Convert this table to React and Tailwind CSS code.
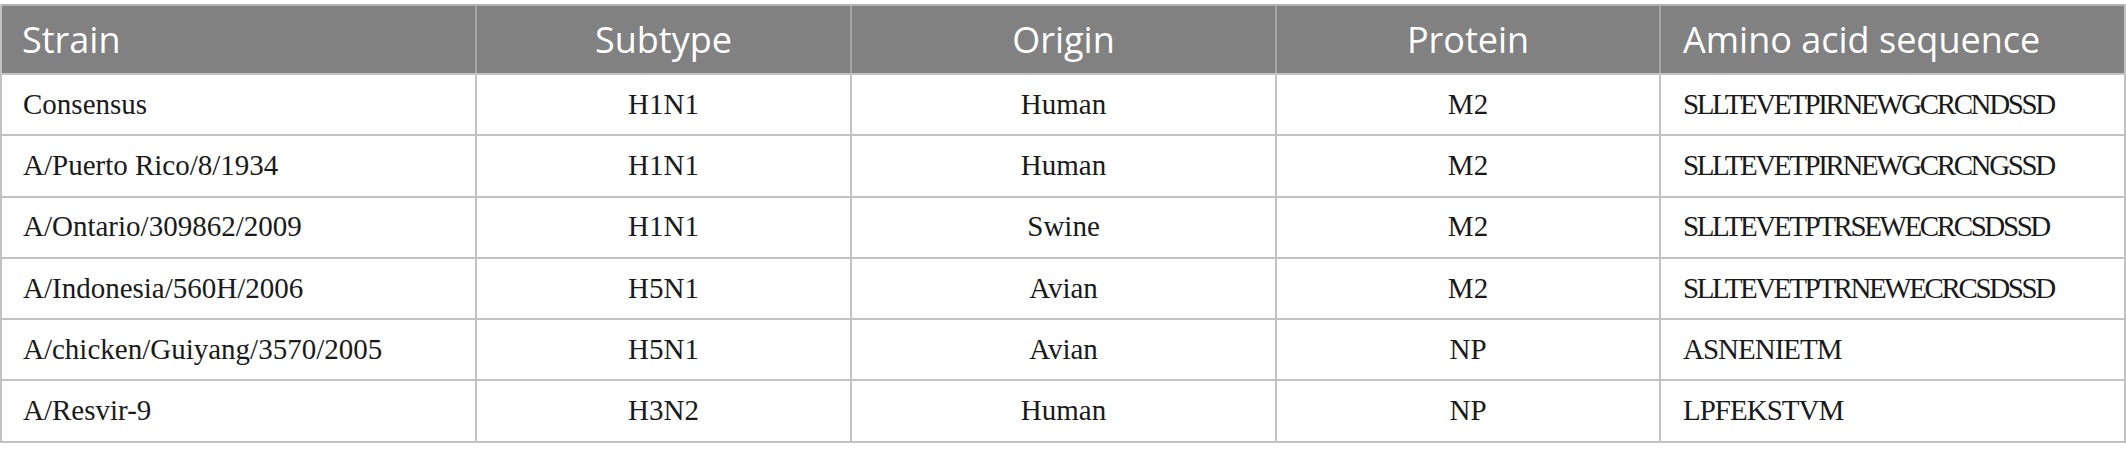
const columns = [
  { label: 'Strain', head: 'text-left pl-[20px]', body: 'text-left pl-[21px]' },
  { label: 'Subtype', head: 'text-center', body: 'text-center' },
  { label: 'Origin', head: 'text-center', body: 'text-center' },
  { label: 'Protein', head: 'text-center', body: 'text-center' },
  { label: 'Amino acid sequence', head: 'text-left pl-[22px]', body: 'text-left pl-[22px]' },
]

const rows = [
  ['Consensus', 'H1N1', 'Human', 'M2', 'SLLTEVETPIRNEWGCRCNDSSD'],
  ['A/Puerto Rico/8/1934', 'H1N1', 'Human', 'M2', 'SLLTEVETPIRNEWGCRCNGSSD'],
  ['A/Ontario/309862/2009', 'H1N1', 'Swine', 'M2', 'SLLTEVETPTRSEWECRCSDSSD'],
  ['A/Indonesia/560H/2006', 'H5N1', 'Avian', 'M2', 'SLLTEVETPTRNEWECRCSDSSD'],
  ['A/chicken/Guiyang/3570/2005', 'H5N1', 'Avian', 'NP', 'ASNENIETM'],
  ['A/Resvir-9', 'H3N2', 'Human', 'NP', 'LPFEKSTVM'],
]

const grid = 'grid grid-cols-[475px_375px_425px_384px_1fr]'

export default function App() {
  return (
    <div className="w-[2126px] h-[460px] bg-white pt-[4px]">
      <div className="border-2 border-t-0 border-[#c2c2c2]">
        {/* header */}
        <div className={`${grid} h-[69px] bg-[#808180] border-t-2 border-[#b2b2b2] text-white font-['Open_Sans',sans-serif] text-[36px]`}>
          {columns.map((c, i) => (
            <div
              key={c.label}
              className={`flex items-center ${i < 4 ? 'border-r-2 border-[#a6a6a6]' : ''} ${c.head} ${c.head.includes('center') ? 'justify-center' : ''}`}
            >
              {c.label}
            </div>
          ))}
        </div>

        {rows.map((r, ri) => (
          <div
            key={ri}
            className={`${grid} h-[61.3px] border-t-2 border-[#c2c2c2] font-['Liberation_Serif',serif] text-[29px] text-[#1a1a1a]`}
          >
            {r.map((cell, ci) => (
              <div
                key={ci}
                className={`flex items-center ${ci < 4 ? 'border-r-2 border-[#c2c2c2]' : ''} ${columns[ci].body} ${columns[ci].body.includes('center') ? 'justify-center' : ''} ${ci === 4 ? (cell.length > 12 ? 'tracking-[-2.4px]' : 'tracking-[-1px]') : ''}`}
              >
                {cell}
              </div>
            ))}
          </div>
        ))}
      </div>
    </div>
  )
}
